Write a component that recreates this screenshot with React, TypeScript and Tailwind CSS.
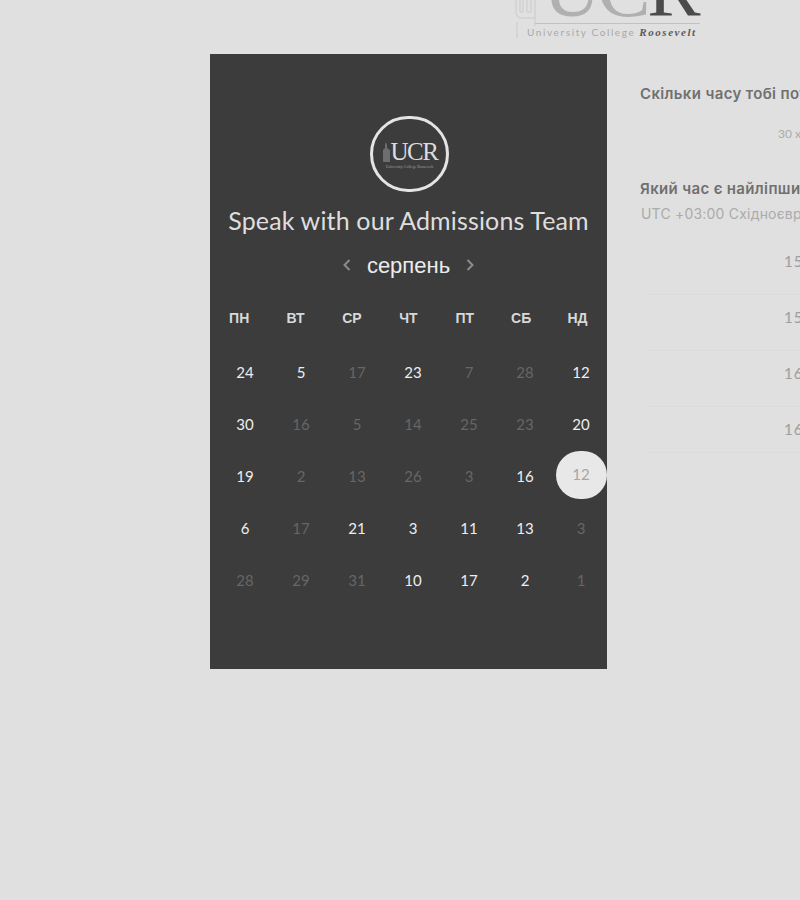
const weeks: [string, boolean][][] = [
  [["24", true], ["5", true], ["17", false], ["23", true], ["7", false], ["28", false], ["12", true]],
  [["30", true], ["16", false], ["5", false], ["14", false], ["25", false], ["23", false], ["20", true]],
  [["19", true], ["2", false], ["13", false], ["26", false], ["3", false], ["16", true], ["12", false]],
  [["6", true], ["17", false], ["21", true], ["3", true], ["11", true], ["13", true], ["3", false]],
  [["28", false], ["29", false], ["31", false], ["10", true], ["17", true], ["2", true], ["1", false]],
];

const dayNames = ["ПН", "ВТ", "СР", "ЧТ", "ПТ", "СБ", "НД"];
const slots = ["15:00", "15:30", "16:00", "16:30"];

function TopLogo() {
  return (
    <div className="relative h-[54px] w-[800px] overflow-hidden">
      <div className="absolute left-[515px] top-[-44px] w-[190px] h-[84px]">
        <svg className="absolute left-0 top-[26px]" width="24" height="56" viewBox="0 0 24 56" fill="none" stroke="#cacaca">
          <path d="M1 0V32M5 0V30H8V0M12 0V30H16V0M20 0V44M1 32L4 36H20M2 56V40" />
        </svg>
        <div className="absolute left-[28px] top-[-7px] flex font-['Liberation_Serif',serif] text-[80px] leading-[80px] tracking-[-3.5px]">
          <span className="text-[#b0b0b0]">UC</span>
          <span className="text-[#4b4b4b]">R</span>
        </div>
        <div className="absolute left-[20px] top-[67px] h-px w-[165px] bg-[#c2c2c2]" />
        <div className="absolute left-[12px] top-[70px] flex items-baseline whitespace-nowrap">
          <span className="font-['Lato',sans-serif] text-[10px] leading-[12px] tracking-[1.6px] text-[#a8a8a8]">University College</span>
          <span className="ml-[4px] font-['Liberation_Serif',serif] text-[11px] leading-[12px] italic font-bold tracking-[1.55px] text-[#5a5a5a]">Roosevelt</span>
        </div>
      </div>
    </div>
  );
}

function CalendarCard() {
  return (
    <div className="w-[397px] h-[615px] shrink-0 bg-[#3c3c3c] flex flex-col">
      <div className="mt-[62px] ml-[160px] w-[79px] h-[76px] rounded-full border-[3px] border-[#e4e4e4] flex flex-col items-center justify-center">
        <div className="flex items-center">
          <svg width="9" height="20" viewBox="0 0 9 20" fill="#6e6e6e">
            <path d="M1 20V8L3 6V3L4 0L5 3V6L8 8V20Z" />
          </svg>
          <span className="font-['Liberation_Serif',serif] text-[25px] leading-[24px] tracking-[-1.5px] text-[#dcdcdc]">UCR</span>
        </div>
        <span className="font-['Liberation_Serif',serif] text-[4px] leading-[5px] text-[#a0a0a0] whitespace-nowrap">University College Roosevelt</span>
      </div>
      <h1 className="mt-[11px] text-center font-['Lato',sans-serif] text-[25px] leading-[34px] tracking-[0.15px] text-[#dedede] whitespace-nowrap">
        Speak with our Admissions Team
      </h1>
      <div className="mt-[13px] flex items-center justify-center h-[32px]">
        <svg className="mb-[3px]" width="8" height="12" viewBox="0 0 8 12" fill="none" stroke="#8c8c8c" strokeWidth="2"><path d="M6.5 1L1.5 6L6.5 11" /></svg>
        <span className="mx-[16px] font-['Liberation_Sans',sans-serif] text-[22px] leading-[30px] text-[#ececec]">серпень</span>
        <svg className="mb-[3px]" width="8" height="12" viewBox="0 0 8 12" fill="none" stroke="#8c8c8c" strokeWidth="2"><path d="M1.5 1L6.5 6L1.5 11" /></svg>
      </div>
      <div className="mt-[26px] ml-[1px] grid grid-cols-[repeat(7,56.4px)] h-[20px] items-center">
        {dayNames.map((d) => (
          <div key={d} className="text-center font-['Liberation_Sans',sans-serif] font-bold text-[14px] text-[#d8d8d8]">{d}</div>
        ))}
      </div>
      <div className="mt-[18px] ml-[7px] flex flex-col">
        {weeks.map((week, i) => (
          <div key={i} className="grid grid-cols-[repeat(7,56px)] h-[52px] items-center">
            {week.map(([n, active], j) => {
              const selected = i === 2 && j === 6;
              return (
                <div key={j} className="relative flex items-center justify-center h-[52px]">
                  {selected && <div className="absolute left-[3px] top-[1px] w-[51px] h-[48px] rounded-full bg-[#e8e8e8]" />}
                  <span className={"relative font-['Lato',sans-serif] text-[15px] " + (selected ? "text-[#a6a6a6] -translate-y-[2px]" : active ? "text-[#eeeeee]" : "text-[#666666]")}>
                    {n}
                  </span>
                </div>
              );
            })}
          </div>
        ))}
      </div>
    </div>
  );
}

function TimePanel() {
  return (
    <div className="ml-[33px] w-[160px] overflow-hidden">
      <div className="w-[420px]">
        <h2 className="mt-[30px] font-['Inter',sans-serif] font-semibold text-[15px] leading-[20px] tracking-[0.35px] text-[#707070] whitespace-nowrap">
          Скільки часу тобі потрібно?
        </h2>
        <p className="mt-[21px] ml-[138px] font-['Lato',sans-serif] text-[12px] leading-[18px] text-[#ababab] whitespace-nowrap">30 хвилин</p>
        <h2 className="mt-[36px] font-['Inter',sans-serif] font-semibold text-[15px] leading-[20px] tracking-[0.35px] text-[#707070] whitespace-nowrap">
          Який час є найліпшим?
        </h2>
        <p className="mt-[5px] ml-[1px] font-['Inter',sans-serif] text-[14px] leading-[20px] tracking-[0.2px] text-[#ababab] whitespace-nowrap">
          UTC +03:00 Східноєвропейський час
        </p>
        <div className="mt-[15px] ml-[7px]">
          {slots.map((s) => (
            <div key={s} className="h-[56px] last:h-[46px] pb-[10px] last:pb-0 border-b border-[#dcdcdc] flex items-center font-['Lato',sans-serif] text-[15px] tracking-[1px] text-[#9e9e9e]">
              <div className="ml-[5px] h-[34px] pl-[131px] border-l border-[#dfdfdf] flex items-center">{s}</div>
            </div>
          ))}
        </div>
      </div>
    </div>
  );
}

export default function App() {
  return (
    <div className="w-[800px] h-[900px] overflow-hidden bg-[#e0e0e0]">
      <TopLogo />
      <div className="flex pl-[210px]">
        <CalendarCard />
        <TimePanel />
      </div>
    </div>
  );
}
